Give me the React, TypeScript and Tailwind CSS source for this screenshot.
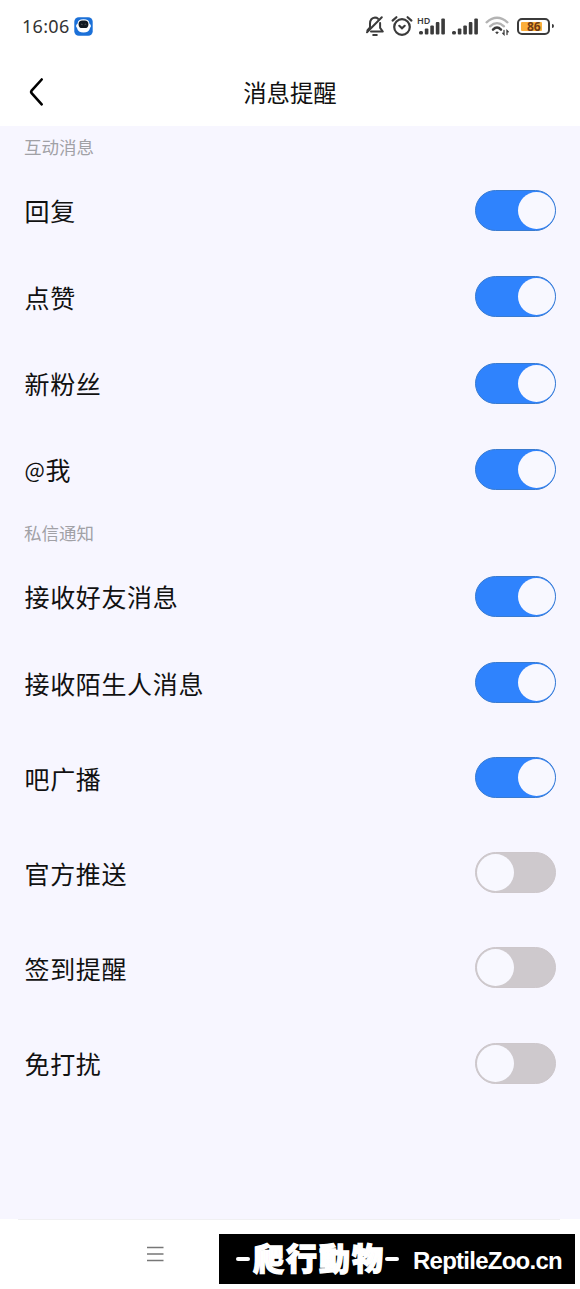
import React, { JSX, useState } from "react";

interface Setting {
  label: string;
  value: string;
  on: boolean;
  className: string;
}

interface SettingRowProps {
  setting: Setting;
  checked: boolean;
  onToggle: () => void;
}

const interactionSettings: Setting[] = [
  { label: "回复", value: "reply", on: true, className: "h-[86.5px]" },
  { label: "点赞", value: "like", on: true, className: "h-[86.5px]" },
  { label: "新粉丝", value: "fans", on: true, className: "h-[86.5px]" },
  { label: "@我", value: "mention", on: true, className: "h-[86.5px]" },
];

const messageSettings: Setting[] = [
  { label: "接收好友消息", value: "friends", on: true, className: "h-[86.5px]" },
  { label: "接收陌生人消息", value: "strangers", on: true, className: "h-[86.5px] mb-1" },
  { label: "吧广播", value: "broadcast", on: true, className: "h-[95px]" },
  { label: "官方推送", value: "official", on: false, className: "h-[95px]" },
  { label: "签到提醒", value: "checkin", on: false, className: "h-[95px]" },
  { label: "免打扰", value: "dnd", on: false, className: "h-[96px]" },
];

function SignalBars() {
  return (
    <svg width="27" height="17" viewBox="0 0 27 17" fill="#3b3b3b">
      <rect x="0" y="13" width="4" height="3.5" rx="1.5" />
      <rect x="5.8" y="10.5" width="3.6" height="6" rx="1" />
      <rect x="11.3" y="7.5" width="3.6" height="9" rx="1" />
      <rect x="16.8" y="4" width="3.6" height="12.5" rx="1" />
      <rect x="22.3" y="0.5" width="3.6" height="16" rx="1" />
    </svg>
  );
}

function StatusBar() {
  return (
    <div className="flex h-[52px] items-center justify-between pl-[22px] pr-[26px]">
      <div className="flex items-center gap-1">
        <span className="w-[48px] font-['Noto_Sans',sans-serif] text-[18px] leading-6 tracking-[0.3px] text-[#333]">16:06</span>
        <svg width="19" height="19" viewBox="0 0 19 19">
          <rect x="0.3" y="0.3" width="18.4" height="18.4" rx="4.5" fill="#1b70d8" />
          <path d="M3.6 6.5Q3.8 2.3 9.5 2.3t5.9 4.2Q17 7.5 17 9.2L16 11q-1 4.6-6.5 4.6T3 11L2 9.2q0-1.7 1.6-2.7z" fill="#fff" />
          <rect x="4.6" y="3.4" width="9.8" height="7.6" rx="3.6" fill="#111820" />
          <path d="M7 7.7q.8-1 1.6 0M10.6 7.7q.8-1 1.6 0" stroke="#777" fill="none" strokeWidth=".7" />
        </svg>
      </div>
      <div className="flex items-center">
        <svg width="20" height="22" viewBox="0 0 20 22" fill="none" stroke="#3b3b3b" strokeWidth="2" strokeLinecap="round" strokeLinejoin="round">
          <path d="M13 3.7Q11.800 2.500 10 2.500 5.200 3 5 8.500v3.800L2.400 15.500M15.100 8v4.800l2.700 3.700H6" />
          <path d="M16.800 2.200 2 17.300M8.200 20h3.600" />
        </svg>
        <svg className="ml-[6px]" width="22" height="22" viewBox="0 0 22 22" fill="none" stroke="#3b3b3b" strokeWidth="2.200" strokeLinecap="round">
          <circle cx="11" cy="12" r="7.800" />
          <path d="M1.600 5.600 5.400 2.200M20.400 5.600 16.600 2.200M8.300 10.800l2.700 2.400 2.700-2.400" />
        </svg>
        <div className="relative ml-[6px]">
          <SignalBars />
          <span className="absolute -left-0.5 -top-[3px] font-['Noto_Sans',sans-serif] text-[9px] font-semibold leading-3 text-[#3b3b3b]">HD</span>
        </div>
        <div className="ml-[6px]">
          <SignalBars />
        </div>
        <svg className="ml-[6px]" width="25" height="20" viewBox="0 0 25 20" fill="none" strokeLinecap="round">
          <path d="M1.600 6.300Q12 -2.700 22.400 6.300" stroke="#b3b3b3" strokeWidth="2.300" />
          <path d="M5 10.300Q12 4 19 10.300" stroke="#b3b3b3" strokeWidth="2.300" />
          <path d="M8 13.600Q12 9.500 16 13.600" stroke="#3b3b3b" strokeWidth="2.500" />
          <path d="M10.200 16.200Q12 15 13.800 16.200L12 18.200z" fill="#3b3b3b" />
          <path d="M19 14.500v4l-1.200-1.200M22 18.500v-4l1.200 1.200" stroke="#3b3b3b" strokeWidth="1.300" />
        </svg>
        <div className="ml-[7px] flex items-center gap-0.5">
          <div className="flex h-[17px] w-[33px] items-center rounded-[5px] border-2 border-[#3b3b3b] p-0.5">
            <div className="relative h-[9px] w-[21px] rounded-[1px] bg-[#fcae3b]">
              <span className="absolute left-[6px] -top-[1px] font-['Noto_Sans',sans-serif] text-[12px] font-bold leading-[11px] text-[#713b16]">
                86
              </span>
            </div>
          </div>
          <div className="h-1 w-0.5 rounded-r bg-[#3b3b3b]" />
        </div>
      </div>
    </div>
  );
}

function Header() {
  return (
    <header className="grid h-[74px] grid-cols-3 items-center pt-[6px]">
      <button className="ml-[28px] w-4">
        <svg width="16" height="30" viewBox="0 0 16 30" fill="none" stroke="#000" strokeWidth="2.600" strokeLinecap="round" strokeLinejoin="round">
          <path d="M13.700 2.500 3.600 13.600q-1 1.300 0 2.600L13.700 27.300" />
        </svg>
      </button>
      <h1 className="whitespace-nowrap pb-px text-center text-[23.400px] leading-8 text-[#111]">消息提醒</h1>
    </header>
  );
}

function SettingRow({ setting, checked, onToggle }: SettingRowProps) {
  return (
    <div className={`flex items-center justify-between pl-[24.500px] pr-[24px] ${setting.className}`}>
      <span className="text-[25px] leading-9 tracking-[0.650px] text-[#111]">
        {setting.label.startsWith("@") ? (
          <>
            <span className="relative -top-[2px] text-[21.500px]">@</span>
            {setting.label.slice(1)}
          </>
        ) : (
          setting.label
        )}
      </span>
      <button
        role="switch"
        aria-checked={checked}
        aria-label={setting.label}
        onClick={onToggle}
        className={`flex h-[41px] w-[81px] items-center rounded-full border
          ${checked ? "justify-end border-[#397bd0] bg-[#2f83fd]" : "justify-start border-[#cdc7cb] bg-[#cec9cd] pl-px"}`}
      >
        <span className="size-[37px] rounded-full bg-[#f8f8ff]" />
      </button>
    </div>
  );
}

export default function App(): JSX.Element {
  const [enabled, setEnabled] = useState<Record<string, boolean>>(
    Object.fromEntries([...interactionSettings, ...messageSettings].map((s) => [s.value, s.on]))
  );

  const toggle = (value: string) => {
    setEnabled((prev) => ({ ...prev, [value]: !prev[value] }));
  };

  return (
    <div className="relative flex h-[1289px] w-[580px] flex-col overflow-hidden bg-white font-['Noto_Sans_CJK_SC',sans-serif]">
      <StatusBar />
      <Header />

      <main className="h-[1093px] bg-[#f7f6ff]">
        <h2 className="flex h-[41px] items-center pl-[24px] text-[17.500px] leading-6 text-[#a1a1a6]">互动消息</h2>
        {interactionSettings.map((s) => (
          <SettingRow key={s.value} setting={s} checked={enabled[s.value]} onToggle={() => toggle(s.value)} />
        ))}

        <h2 className="flex h-[40px] items-center pb-px pl-[24px] text-[17.500px] leading-6 text-[#a1a1a6]">私信通知</h2>
        {messageSettings.map((s) => (
          <SettingRow key={s.value} setting={s} checked={enabled[s.value]} onToggle={() => toggle(s.value)} />
        ))}
      </main>

      <nav className="flex flex-1 flex-col">
        <div className="ml-[18px] mr-[20px] h-px bg-[#f0f0f2]" />
        <div className="flex flex-1 items-center pb-px pl-[147px]">
          <svg width="17" height="16" viewBox="0 0 17 16" stroke="#777" strokeWidth="1.600">
            <path d="M0 1.500h16.500M0 8h16.500M0 14.500h16.500" />
          </svg>
        </div>
      </nav>

      {/* site badge over the bottom bar */}
      <div className="absolute left-[219px] top-[1234px] flex h-[50px] w-[356px] items-center whitespace-nowrap bg-black text-white">
        <span className="ml-[17px] h-1 w-[14px] rounded-sm bg-white" />
        <span className="ml-[3px] w-[132px] pb-[5px] font-['Noto_Sans_CJK_TC',sans-serif] text-[31px] font-black leading-[46px] tracking-[2px] [-webkit-text-stroke:1.300px_white]">
          爬行動物
        </span>
        <span className="h-1 w-[14px] rounded-sm bg-white" />
        <span className="ml-[14px] pt-[3px] font-['Liberation_Sans',sans-serif] text-[24px] font-bold leading-8 tracking-[-0.750px]">
          ReptileZoo.cn
        </span>
      </div>
    </div>
  );
}
